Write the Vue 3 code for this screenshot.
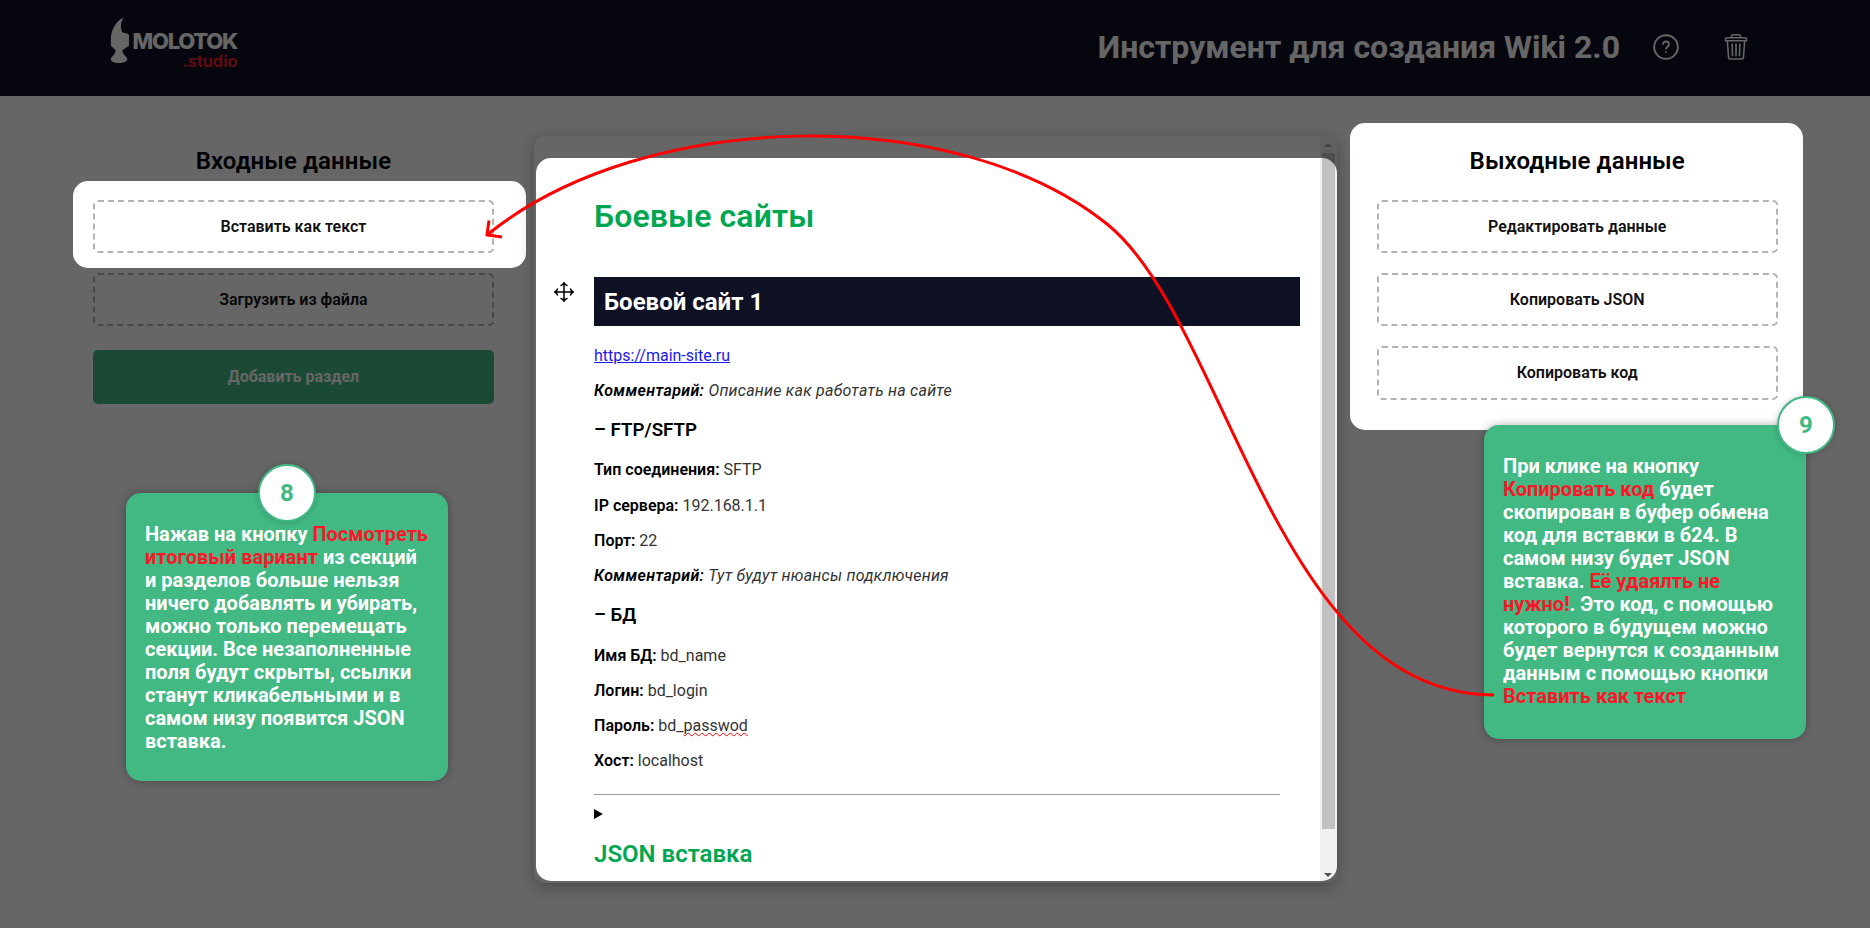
<script setup>
const rows = [
  { type: 'p', label: 'Комментарий:', value: 'Описание как работать на сайте', italic: true },
  { type: 'h', label: '– FTP/SFTP' },
  { type: 'p', label: 'Тип соединения:', value: 'SFTP' },
  { type: 'p', label: 'IP сервера:', value: '192.168.1.1' },
  { type: 'p', label: 'Порт:', value: '22' },
  { type: 'p', label: 'Комментарий:', value: 'Тут будут нюансы подключения', italic: true },
  { type: 'h', label: '– БД' },
  { type: 'p', label: 'Имя БД:', value: 'bd_name' },
  { type: 'p', label: 'Логин:', value: 'bd_login' },
  { type: 'p', label: 'Пароль:', value: 'bd_', typo: 'passwod' },
  { type: 'p', label: 'Хост:', value: 'localhost' },
]
const inputs = ['Вставить как текст', 'Загрузить из файла']
const outputs = ['Редактировать данные', 'Копировать JSON', 'Копировать код']

const hole = ([x, y, w, h, r]) =>
  `M${x + r} ${y}h${w - 2 * r}a${r} ${r} 0 0 1 ${r} ${r}v${h - 2 * r}a${r} ${r} 0 0 1 ${-r} ${r}h${2 * r - w}a${r} ${r} 0 0 1 ${-r} ${-r}v${2 * r - h}a${r} ${r} 0 0 1 ${r} ${-r}z`
const shade =
  'M0 0H1870V928H0z' +
  [
    [73, 181, 453, 87, 15],
    [536, 158, 801, 723, 15],
    [1350, 123, 453, 307, 15],
  ]
    .map(hole)
    .join('')
</script>

<template>
  <div class="page">
    <header class="header">
      <div class="brand">
        <svg width="20" height="47" viewBox="0 0 20 47">
          <path fill="#fff" d="M13.600.2C6 4 1 13 .8 22v6.500L5 32.800c1 1.300.4 3-.8 4.400C3 39 .8 40.300.8 42.300.8 44.600 4.500 46 9 46s8.300-1.400 8.300-3.700c0-2-2.300-3.300-3.500-5.100-1.200-1.400-1.800-3.100-.8-4.400L19 28.800V18L17.300 16.400 12.500 15.400C10 11 10.500 5 13.600.2z" />
        </svg>
        <div class="brand-text">
          <div class="logo-main">MOLOTOK</div>
          <div class="logo-sub">.studio</div>
        </div>
      </div>
      <div class="head-right">
        <div class="head-title">Инструмент для создания Wiki 2.0</div>
        <svg class="help" width="26" height="26" viewBox="0 0 26 26" fill="none" stroke="#fff">
          <circle cx="13" cy="13" r="11.800" stroke-width="1.900" />
          <path d="M10 10.800c0-2 1.200-3.300 3-3.300s3 1.200 3 2.900c0 2.300-3 2.500-3 5" stroke-width="1.800" />
          <circle cx="13" cy="18.200" r=".6" />
        </svg>
        <svg class="trash" width="24" height="26" viewBox="0 0 24 26" fill="none" stroke="#fff" stroke-width="1.600">
          <path d="M7.500 3.500V2.200c0-.9.5-1.400 1.300-1.400h6.400c.8 0 1.300.5 1.300 1.400v1.300" />
          <path d="M3 3.700h18c1 0 1.500.6 1.500 1.400v1.700h-21V5.100C1.500 4.300 2 3.700 3 3.700z" />
          <path d="M3.300 7l1.300 16.700c.1.800.6 1.300 1.400 1.300h12c.8 0 1.300-.5 1.400-1.300L20.700 7M8 9.500l.6 12.800M12 9.500v12.800M16 9.500l-.6 12.800" />
        </svg>
      </div>
    </header>

    <main class="main">
      <section class="side">
        <h2 class="side-title">Входные данные</h2>
        <button v-for="t in inputs" :key="t" class="btn">{{ t }}</button>
        <button class="btn add">Добавить раздел</button>
      </section>

      <section class="panel">
        <article class="doc">
          <h1 class="doc-title">Боевые сайты</h1>
          <div class="bar-row">
            <svg class="move" width="20" height="20" viewBox="0 0 20 20" fill="none" stroke="#000" stroke-width="1.500">
              <path d="M10 1v18M1 10h18M6.500 3.700Q9 3 10 .8Q11 3 13.500 3.700M6.500 16.300Q9 17 10 19.200Q11 17 13.500 16.300M3.700 6.500Q3 9 .8 10Q3 11 3.700 13.500M16.300 6.500Q17 9 19.200 10Q17 11 16.300 13.500" />
            </svg>
            <div class="bar">Боевой сайт 1</div>
          </div>
          <p class="row"><span class="link">https://main-site.ru</span></p>
          <template v-for="(r, i) in rows" :key="i">
            <h3 v-if="r.type === 'h'" class="sub">{{ r.label }}</h3>
            <p v-else class="row" :class="{ italic: r.italic }">
              <b>{{ r.label }}</b> {{ r.value }}<span v-if="r.typo" class="typo">{{ r.typo }}</span>
            </p>
          </template>
          <div class="rule"></div>
          <div class="marker"></div>
          <h2 class="json">JSON вставка</h2>
        </article>
        <div class="scroll">
          <i class="arrow up"></i>
          <div class="track"><div class="thumb"></div></div>
          <i class="arrow down"></i>
        </div>
      </section>

      <section class="side">
        <h2 class="side-title">Выходные данные</h2>
        <button v-for="t in outputs" :key="t" class="btn">{{ t }}</button>
      </section>
    </main>

    <svg class="layer" width="1870" height="928" viewBox="0 0 1870 928">
      <path :d="shade" fill="#000" fill-opacity=".6" fill-rule="evenodd" />
    </svg>

    <div class="tip tip-8">
      <div class="num">8</div>
      Нажав на кнопку <em>Посмотреть<br />итоговый вариант</em> из секций<br />и разделов больше нельзя<br />ничего добавлять и убирать,<br />можно только перемещать<br />секции. Все незаполненные<br />поля будут скрыты, ссылки<br />станут кликабельными и в<br />самом низу появится JSON<br />вставка.
    </div>
    <div class="tip tip-9">
      <div class="num">9</div>
      При клике на кнопку<br /><em>Копировать код</em> будет<br />скопирован в буфер обмена<br />код для вставки в б24. В<br />самом низу будет JSON<br />вставка. <em>Её удаялть не<br />нужно!</em>. Это код, с помощью<br />которого в будущем можно<br />будет вернутся к созданным<br />данным с помощью кнопки<br /><em>Вставить как текст</em>
    </div>

    <svg class="layer" width="1870" height="928" viewBox="0 0 1870 928" fill="none" stroke="#f00" stroke-width="3">
      <path d="M487 235C644 107 957 103 1107 224C1227 320 1275 695 1494 695" />
      <path d="M489 220.500L487 235L502 237" stroke-linejoin="miter" />
    </svg>
  </div>
</template>

<style>
body {
  margin: 0;
  overflow: hidden;
}
</style>

<style scoped>
.page {
  position: relative;
  width: 1870px;
  height: 928px;
  overflow: hidden;
  background: #fff;
  color: #000;
  font-family: Roboto, 'Liberation Sans', sans-serif;
}
.header {
  height: 96px;
  box-sizing: border-box;
  padding: 17px 122px 0 110px;
  display: flex;
  justify-content: space-between;
  background: #0e1024;
}
.brand {
  display: flex;
  align-items: flex-start;
}
.brand-text {
  width: 107.500px;
  margin-top: 15px;
  display: flex;
  flex-direction: column;
  align-items: flex-end;
}
.logo-main {
  margin-right: 0.500px;
  color: #fff;
  font: 800 22px/18px Inter, sans-serif;
  letter-spacing: -1.250px;
}
.logo-sub {
  margin-top: 3px;
  color: #ff1c2c;
  font: 600 16.500px/16px Inter, sans-serif;
}
.head-right {
  display: flex;
  align-items: flex-start;
  color: #fff;
}
.head-title {
  margin-top: 11px;
  font-size: 32px;
  line-height: 38px;
  font-weight: 700;
  white-space: nowrap;
}
.help {
  margin: 17px 0 0 32.500px;
}
.trash {
  margin: 17px 0 0 45.500px;
}
.main {
  display: grid;
  grid-template-columns: 1fr 2fr 1fr;
  gap: 40px;
  padding: 40px 92.200px 0 92.800px;
}
.side {
  padding-top: 11px;
}
.side-title {
  margin: 0 0 25px;
  font-size: 24px;
  line-height: 28px;
  font-weight: 600;
  letter-spacing: 0.080px;
  text-align: center;
}
.btn {
  display: block;
  box-sizing: border-box;
  width: 100%;
  height: 53.200px;
  margin: 0 0 20px;
  padding: 0;
  border: 2px dashed #b3b3b3;
  border-radius: 5px;
  background: transparent;
  color: #111;
  font: 600 16px Roboto, sans-serif;
}
.add {
  margin-top: 24px;
  border: 0;
  background: #42b883;
  color: #fff;
  font-weight: 700;
}
.panel {
  height: 747px;
  display: flex;
  background: #fff;
  border-radius: 10px;
  overflow: hidden;
  box-shadow: 0 4px 16px rgba(0, 0, 0, 0.3);
}
.doc {
  flex: 1;
  padding: 61px 20px 0 60px;
}
.doc-title {
  margin: 0 0 42px;
  font-size: 32px;
  line-height: 38px;
  font-weight: 600;
  letter-spacing: 0.100px;
  color: #00a650;
}
.bar-row {
  display: flex;
  margin-left: -40px;
  margin-bottom: 20px;
}
.move {
  margin: 5px 20px 0 0;
  flex: none;
}
.bar {
  flex: 1;
  height: 49px;
  padding-left: 10px;
  background: #0e1024;
  color: #fff;
  font-size: 24px;
  line-height: 51px;
  font-weight: 700;
}
.row {
  margin: 0 0 16.300px;
  color: #333;
  font-size: 16px;
  line-height: 19px;
  font-weight: 400;
}
.row b {
  color: #000;
  font-weight: 600;
}
.italic {
  font-style: italic;
  letter-spacing: 0.240px;
}
.italic b {
  letter-spacing: 0.360px;
}
.link {
  color: #1a1aee;
  text-decoration: underline;
}
.typo {
  text-decoration: underline wavy #f00 1px;
  text-decoration-skip-ink: none;
}
.sub {
  margin: 18.800px 0 19.400px;
  font-size: 18.720px;
  line-height: 22px;
  font-weight: 600;
}
.rule {
  height: 1px;
  margin: 23.500px 20px 0 0;
  background: #999;
}
.marker {
  width: 0;
  margin-top: 14px;
  border: 5px solid transparent;
  border-left: 9px solid #000;
  border-right: 0;
}
.json {
  margin: 21px 0 0;
  font-size: 24px;
  line-height: 28px;
  font-weight: 600;
  color: #00a650;
}
.scroll {
  width: 17px;
  display: flex;
  flex-direction: column;
  align-items: center;
  background: #f1f1f1;
}
.track {
  flex: 1;
}
.thumb {
  width: 13px;
  height: 676px;
  background: #c1c1c1;
}
.arrow {
  width: 0;
  height: 0;
  border: 4px solid transparent;
}
.up {
  margin-bottom: 6px;
  border-top-width: 7px;
  border-bottom-color: #a3a3a3;
}
.down {
  border-top-color: #505050;
  margin-top: 7px;
  border-bottom-width: 6px;
}
.layer {
  position: absolute;
  left: 0;
  top: 0;
}
.tip {
  position: absolute;
  box-sizing: border-box;
  width: 322px;
  padding: 30px 0 0 19px;
  border-radius: 15px;
  background: #42b883;
  box-shadow: 0 0 10px rgba(0, 0, 0, 0.3);
  color: #fff;
  font-size: 20px;
  line-height: 23px;
  font-weight: 700;
  white-space: nowrap;
}
.tip em {
  font-style: normal;
  color: #f9182a;
}
.tip-8 {
  left: 126px;
  top: 493px;
  height: 288px;
}
.tip-9 {
  left: 1484px;
  top: 425px;
  height: 314px;
}
.num {
  position: absolute;
  top: -29px;
  left: 132px;
  width: 54px;
  height: 54px;
  border: 2px solid #42b883;
  border-radius: 50%;
  background: #fff;
  color: #42b883;
  font-size: 24px;
  line-height: 54px;
  text-align: center;
  box-shadow: 0 0 6px rgba(0, 0, 0, 0.2);
}
.tip-9 .num {
  left: 293px;
}
</style>
